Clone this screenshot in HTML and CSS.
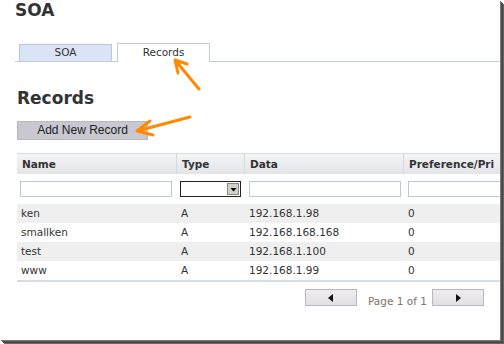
FILE: index.html
```html
<!DOCTYPE html>
<html>
<head>
<meta charset="utf-8">
<link rel="stylesheet" href="styles.css">
</head>
<body>
<div class="frame">
<div class="page">
  <h1 class="title">SOA</h1>
  <div class="tabs">
    <div class="tab tab-soa">SOA</div>
    <div class="tab tab-active">Records</div>
  </div>
  <h2 class="heading">Records</h2>
  <div class="btn-add">Add New Record</div>
  <div class="grid">
    <div class="hcell">Name</div>
    <div class="hcell">Type</div>
    <div class="hcell">Data</div>
    <div class="hcell hcell-last">Preference/Pri</div>

    <div class="fcell"><span class="input w-name"></span></div>
    <div class="fcell"><span class="select"><span class="sel-btn"><svg width="9" height="9" viewBox="0 0 9 9"><path d="M1.5 3h6L4.5 6.5z" fill="#000"/></svg></span></span></div>
    <div class="fcell"><span class="input w-data"></span></div>
    <div class="fcell"><span class="input w-pref"></span></div>

    <div class="cell odd">ken</div><div class="cell odd">A</div><div class="cell odd">192.168.1.98</div><div class="cell odd">0</div>
    <div class="cell">smallken</div><div class="cell">A</div><div class="cell">192.168.168.168</div><div class="cell">0</div>
    <div class="cell odd">test</div><div class="cell odd">A</div><div class="cell odd">192.168.1.100</div><div class="cell odd">0</div>
    <div class="cell">www</div><div class="cell">A</div><div class="cell">192.168.1.99</div><div class="cell">0</div>
  </div>
  <div class="pager">
    <div class="pbtn"><svg width="6" height="8" viewBox="0 0 6 8"><path d="M5 0v8L0 4z" fill="#111"/></svg></div>
    <span class="ptext">Page 1 of 1</span>
    <div class="pbtn"><svg width="6" height="8" viewBox="0 0 6 8"><path d="M1 0v8l5-4z" fill="#111"/></svg></div>
  </div>
  <svg class="arrows" width="500" height="340" viewBox="0 0 500 340">
    <g stroke="#ff8a00" stroke-width="3" stroke-linecap="round" stroke-linejoin="round" fill="none">
      <path d="M199 89L175 60M175 60L187 64M175 60L178 73"/>
      <path d="M190 117L137 131M137 131L150 121M137 131L153 135"/>
    </g>
  </svg>
</div>
</div>
</body>
</html>
```

FILE: styles.css
```css
html, body {
  margin: 0;
  padding: 0;
  background: #fff;
}
.frame {
  width: 504px;
  height: 344px;
  background: #fff;
}
.page {
  position: relative;
  width: 500px;
  height: 340px;
  overflow: hidden;
  background: #fff;
  box-shadow: 1px 1px 0 #777, 2px 2px 0 #555, 3px 3px 0 #444, 4px 4px 0 #666;
  font-family: "DejaVu Sans", Verdana, sans-serif;
  font-size: 10.5px;
  color: #333;
}
.title {
  margin: 0 0 0 15px;
  font-size: 17px;
  line-height: 20px;
  font-weight: bold;
  color: #333;
}
.tabs {
  display: flex;
  align-items: flex-end;
  gap: 5px;
  margin: 24px 0 0 15px;
  padding-left: 4px;
  height: 17px;
  border-bottom: 1px solid #c2ccd8;
}
.tab {
  box-sizing: border-box;
  width: 93px;
  text-align: center;
  font-size: 10.5px;
  color: #333;
}
.tab-soa {
  height: 17px;
  line-height: 15px;
  background: #dbe4f4;
  border: 1px solid #b9c7dc;
  border-bottom: none;
}
.tab-active {
  height: 19px;
  line-height: 17px;
  margin-bottom: -1px;
  background: #fff;
  border: 1px solid #c4ccd8;
  border-bottom: none;
}
.heading {
  margin: 26px 0 0 17px;
  font-size: 17px;
  line-height: 20px;
  font-weight: bold;
  color: #333;
}
.btn-add {
  box-sizing: border-box;
  margin: 13px 0 0 17px;
  width: 131px;
  height: 19px;
  line-height: 17px;
  text-align: center;
  background: #c9c8d0;
  border: 1px solid #b8b8c4;
  font-family: "Liberation Sans", Arial, sans-serif;
  font-size: 12px;
  color: #222;
}
.grid {
  display: grid;
  grid-template-columns: 160px 68px 159px 96px;
  margin: 13px 0 0 17px;
  width: 483px;
  border-bottom: 2px solid #d4dde8;
}
.hcell {
  box-sizing: border-box;
  height: 21px;
  line-height: 20px;
  padding-left: 5px;
  font-weight: bold;
  font-size: 10.5px;
  white-space: nowrap;
  overflow: hidden;
  background: linear-gradient(#f4f5f7, #e2e4e8);
  border-top: 1px solid #d6dde8;
  border-right: 1px solid #d2d9e4;
}
.hcell-last {
  border-right: none;
}
.fcell {
  height: 30px;
  display: flex;
  align-items: center;
  padding-left: 3px;
  overflow: hidden;
}
.input {
  box-sizing: border-box;
  flex: none;
  height: 16px;
  background: #fff;
  border: 1px solid #b9c9dc;
}
.w-name { width: 152px; }
.w-data { width: 152px; margin-left: 1px; }
.w-pref { width: 152px; margin-left: 1px; }
.select {
  box-sizing: border-box;
  width: 61px;
  height: 16px;
  background: #fff;
  border: 1px solid #222;
  display: flex;
  justify-content: flex-end;
  align-items: center;
  padding-right: 1px;
}
.sel-btn {
  box-sizing: border-box;
  width: 12px;
  height: 12px;
  background: #d4d0c8;
  border: 1px solid #888;
  display: flex;
  align-items: center;
  justify-content: center;
}
.cell {
  height: 19px;
  line-height: 19px;
  padding-left: 4px;
  white-space: nowrap;
  background: #fff;
}
.cell.odd {
  background: #efefef;
}
.pager {
  display: flex;
  align-items: flex-start;
  margin: 7px 0 0 305px;
}
.pbtn {
  box-sizing: border-box;
  width: 52px;
  height: 17px;
  background: linear-gradient(#eeecf0, #e2e0e6);
  border: 1px solid #b8b8c2;
  display: flex;
  align-items: center;
  justify-content: center;
}
.ptext {
  margin: 6px 5px 0 11px;
  color: #7b7464;
  font-size: 10.5px;
  line-height: 13px;
}
.arrows {
  position: absolute;
  left: 0;
  top: 0;
  pointer-events: none;
}
```
